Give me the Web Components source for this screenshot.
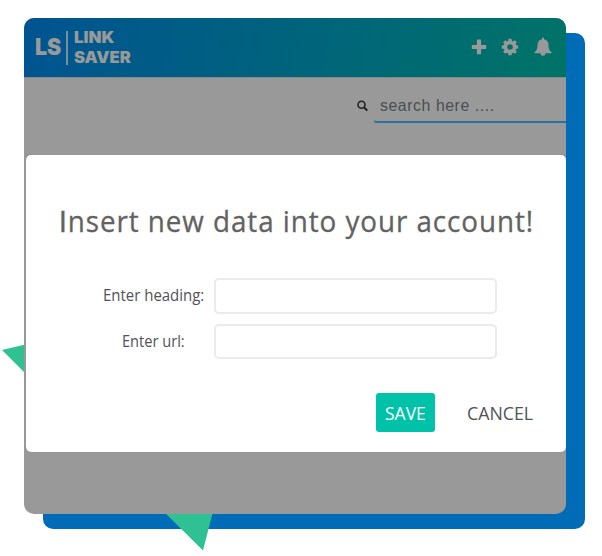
<!DOCTYPE html>
<html lang="en"><head><meta charset="utf-8"><title>Link Saver</title>
<style>
body{margin:0;background:#fff;width:602px;height:556px;overflow:hidden;font-family:"Open Sans","Noto Sans",sans-serif}
.cap{font-family:Lato,"Liberation Sans",sans-serif}
</style></head><body>
<link-stage>
  <link-header slot="window"></link-header>
  <link-search slot="window"></link-search>
  <link-dialog slot="window">
    <fit-text slot="title" w="475"><span class="cap">I</span>nsert new data into your account!</fit-text>
    <form-row slot="rows" style="--h:36px"><fit-text w="101">Enter heading:</fit-text></form-row>
    <form-row slot="rows" style="--h:35px"><fit-text w="63">Enter url:</fit-text></form-row>
    <link-button slot="actions" primary><fit-text w="41">SAVE</fit-text></link-button>
    <link-button slot="actions"><fit-text w="66">CANCEL</fit-text></link-button>
  </link-dialog>
</link-stage>
<script>
const define=(name,html,ready)=>customElements.define(name,class extends HTMLElement{
  constructor(){super();this.attachShadow({mode:'open'}).innerHTML=html}
  connectedCallback(){if(ready)ready(this)}
});

/* One line of text condensed or widened to the width given in "w" */
define('fit-text',`<style>:host{display:block;white-space:nowrap;flex:none}span{display:inline-block;transform-origin:0 50%}</style><span><slot></slot></span>`,el=>{
  const w=+el.getAttribute('w'),s=el.shadowRoot.querySelector('span');
  el.style.width=w+'px';
  requestAnimationFrame(()=>{s.style.transform=`scaleX(${w/s.offsetWidth})`});
});

define('link-stage',`<style>
:host{display:block;position:relative;width:602px;height:556px}
.back{position:absolute;left:43px;top:33px;width:542px;height:496px;border-radius:10px;background:#006cb7}
svg{position:absolute;left:0;top:0}
.win{position:absolute;left:24px;top:18px;width:542px;height:496px;border-radius:10px;background:#999;overflow:hidden;display:flex;flex-direction:column}
</style><div class="back"></div>
<svg width="602" height="556"><path d="M2 350L40 341V388ZM150 498L203 550.5L216.500 498Z" fill="#2fc192"/></svg>
<div class="win"><slot name="window"></slot></div>`);

define('link-header',`<style>
:host{display:flex;flex:none;box-sizing:border-box;height:59px;padding:0 14px 0 11px;align-items:center;color:#999;background:linear-gradient(100deg,#005491,#007367);font-family:Inter,sans-serif;font-weight:900}
.ls{font-size:23px;line-height:28px;margin-top:-2px}
.bar{width:2px;height:34px;background:#7590a1;margin:0 6px 0 5px}
.name{font-size:16px;line-height:20.5px;margin-top:-1px}
.icons{margin-left:auto;display:flex;align-items:center;margin-top:-1px}
svg{display:block;fill:#999}
</style>
<fit-text class="ls" w="26">LS</fit-text><div class="bar"></div>
<div class="name"><fit-text w="40">LINK</fit-text><fit-text w="57">SAVER</fit-text></div>
<div class="icons">
<svg width="16" height="16" viewBox="0 0 16 16" style="margin-right:14px"><path d="M6.500.5h3q.6 0 .6.6v4.800h4.500q.6 0 .6.6v2.800q0 .6-.6.6h-4.500v4.800q0 .6-.6.6h-3q-.6 0-.6-.6V9.900H1.400q-.6 0-.6-.6V6.500q0-.6.6-.6h4.500V1.100q0-.6.6-.6z"/></svg>
<svg width="18" height="18" viewBox="-9 -9 18 18" style="margin-right:15px"><g id="g"></g><path fill-rule="evenodd" d="M0-6.300a6.300 6.300 0 1 0 0 12.600a6.300 6.300 0 1 0 0-12.600zM0-2.800a2.800 2.800 0 1 1 0 5.600a2.800 2.800 0 1 1 0-5.600z"/></svg>
<svg width="18" height="20" viewBox="0 0 18 20"><path d="M8 1.500a1 1 0 0 1 2 0v.7c3 .5 4.500 2.700 4.500 5.600 0 4.200 1 6 3 7.500v1H.5v-1c2-1.500 3-3.300 3-7.500 0-2.900 1.500-5.100 4.500-5.600zM6.500 16.300h5a2.500 2.500 0 0 1-5 0z"/></svg>
</div>`,el=>{
  el.shadowRoot.getElementById('g').innerHTML=[0,45,90,135,180,225,270,315].map(a=>`<path transform="rotate(${a})" d="M-2-5.500L-1.500-8.200H1.500L2-5.500Z"/>`).join('');
});

define('link-search',`<style>
:host{display:flex;flex:none;align-items:flex-start;height:78px;box-sizing:border-box;padding:16px 0 0 333px;font-family:"Liberation Sans",Arial,sans-serif;border-top:1px solid #888}
svg{display:block;flex:none;margin:6px 5px 0 0}
.field{width:193px;height:29px;box-sizing:border-box;padding:1px 0 0 6px;border-bottom:2px solid #2c719f;border-left:1px solid transparent;border-bottom-left-radius:4px;font-size:16.5px;line-height:20px;letter-spacing:.6px;color:#4a4e52}
</style><svg width="11" height="12" viewBox="0 0 11 12" fill="none" stroke="#222"><circle cx="4.500" cy="4.800" r="3.500" stroke-width="1.600"/><path d="M7.200 7.500L10.300 10.600" stroke-width="2"/></svg>
<div class="field"><fit-text w="115">search here ....</fit-text></div>`);

define('link-dialog',`<style>
:host{display:flex;flex:none;flex-direction:column;margin-left:2px;width:540px;height:297px;box-sizing:border-box;background:#fff;border-radius:5px;box-shadow:0 0 1px #777;color:#505357}
.title{padding:45px 0 0 33px;font-size:29px;line-height:42px;letter-spacing:1px;color:#626262;-webkit-text-stroke:.3px #626262}
.rows{display:flex;flex-direction:column;gap:10px;margin:36px 69px 0 69px;font-size:16px}
.actions{display:flex;margin:34px 32px 0 0;justify-content:flex-end;gap:23px;font-size:17.5px}
</style><div class="title"><slot name="title"></slot></div><div class="rows"><slot name="rows"></slot></div><div class="actions"><slot name="actions"></slot></div>`);

define('form-row',`<style>
:host{display:flex;align-items:center}
.label{width:118.500px;display:flex;justify-content:center;padding:0 2px 2px 0;box-sizing:border-box;line-height:22px}
input{flex:1;min-width:0;height:var(--h);box-sizing:border-box;border:2px solid #ebebeb;border-radius:5px;background:#fff;padding:0 8px;outline:0}
</style><div class="label"><slot></slot></div><input type="text">`);

define('link-button',`<style>
:host{display:flex;align-items:center;justify-content:center;height:39px;box-sizing:border-box;padding:0 1px 0 9px;border-radius:3px}
:host([primary]){background:#00c2a8;color:#fff;padding:0 9px}
</style><slot></slot>`);
</script></body></html>
